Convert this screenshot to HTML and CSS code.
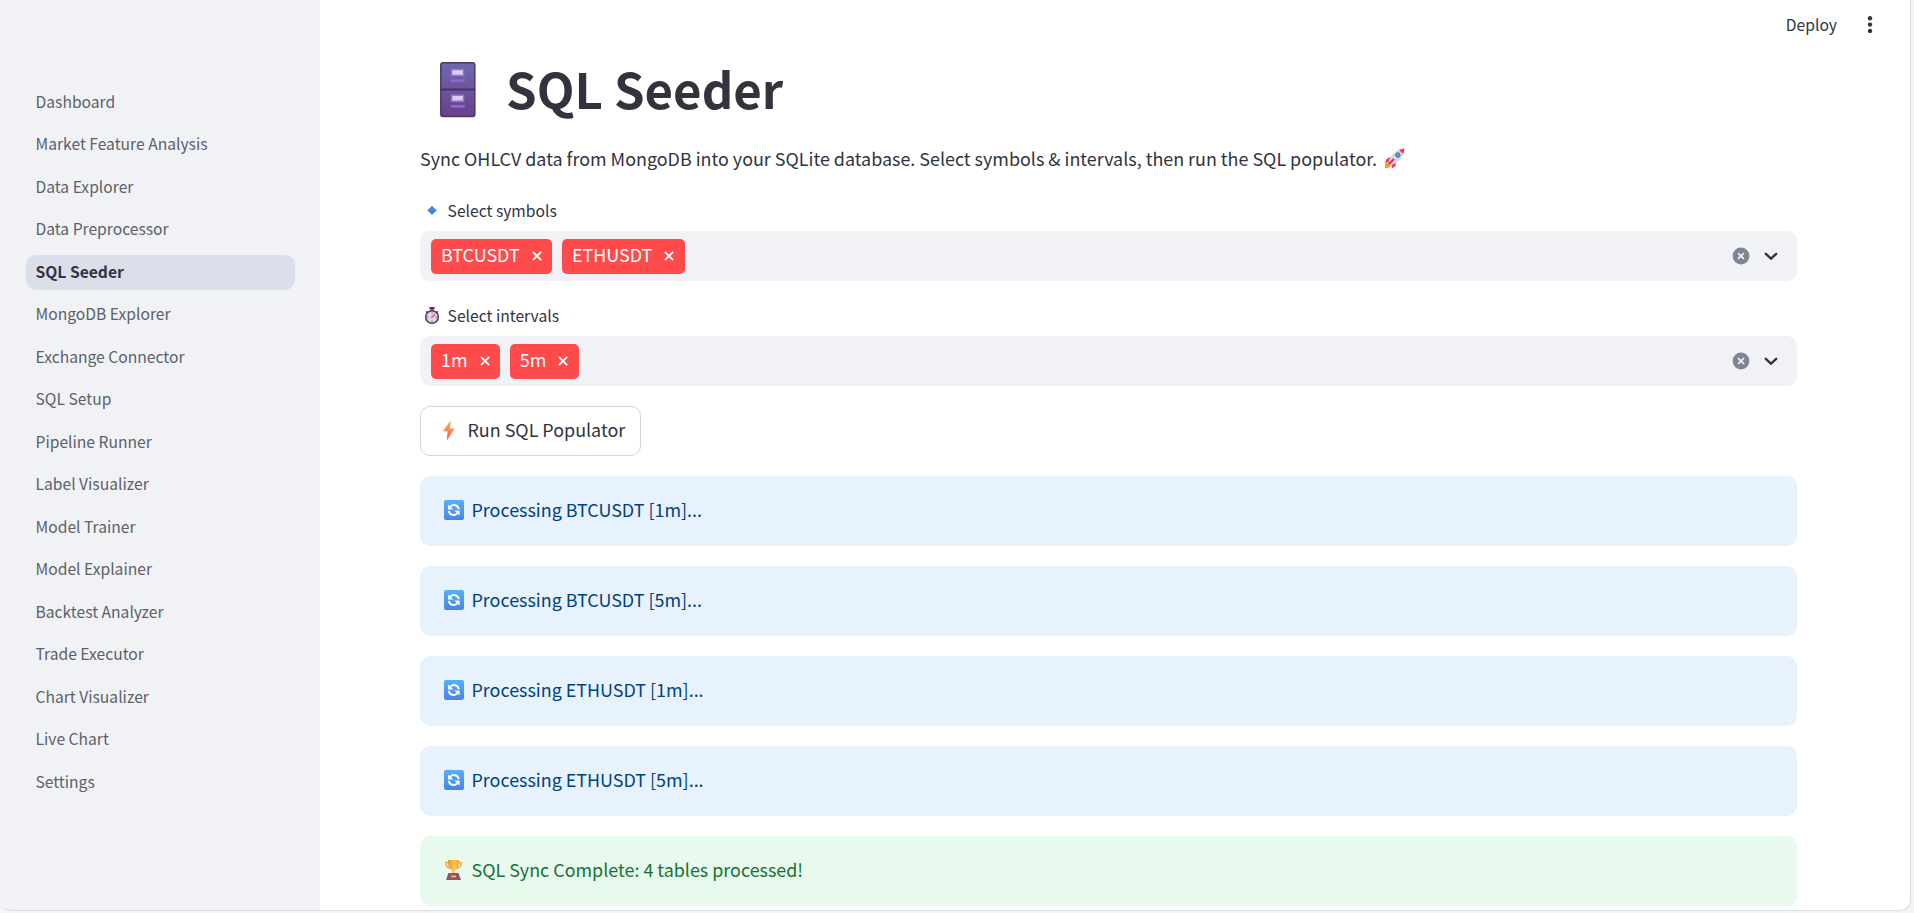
FILE: index.html
```html
<!DOCTYPE html>
<html lang="en">
<head>
<meta charset="utf-8">
<title>SQL Seeder</title>
<link rel="stylesheet" href="styles.css">
</head>
<body>
<svg class="defs" width="0" height="0" aria-hidden="true">
  <defs>
    <linearGradient id="cab" x1="0" y1="0" x2="0" y2="1"><stop offset="0" stop-color="#6e69ae"/><stop offset="1" stop-color="#66428a"/></linearGradient>
    <linearGradient id="bolt" x1="0" y1="0" x2="0" y2="1"><stop offset="0" stop-color="#f9ab4a"/><stop offset=".5" stop-color="#fb8a4c"/><stop offset="1" stop-color="#f6475a"/></linearGradient>
    <linearGradient id="blue" x1="0" y1="0" x2="0" y2="1"><stop offset="0" stop-color="#55b0fb"/><stop offset="1" stop-color="#4b83e6"/></linearGradient>
    <linearGradient id="gold" x1="0" y1="0" x2="1" y2="0"><stop offset="0" stop-color="#ee9038"/><stop offset=".6" stop-color="#fdc94c"/><stop offset="1" stop-color="#f3a03f"/></linearGradient>
    <symbol id="sync" viewBox="0 0 20 20">
      <rect width="20" height="20" rx="2" fill="url(#blue)"/>
      <path d="M6.4 6.6C9 4 14 4.6 14.8 9.2M13.2 13.4C10.6 16 5.6 15.4 4.8 10.8" fill="none" stroke="#fff" stroke-width="2"/>
      <path d="M4 4.4V9.4H9.4ZM15.6 15.6V10.6H10.2Z" fill="#fff"/>
    </symbol>
    <symbol id="cross" viewBox="0 0 10 10"><path d="M.9.9 9.1 9.1M9.1.9.9 9.1" fill="none" stroke="#fff" stroke-width="1.9"/></symbol>
    <symbol id="clear" viewBox="0 0 18 18"><circle cx="9" cy="9" r="8.4" fill="#808495"/><path d="M6.1 6.1 11.9 11.9M11.9 6.1 6.1 11.9" stroke="#f0f2f6" stroke-width="1.7"/></symbol>
    <symbol id="chevron" viewBox="0 0 14 9"><path d="M1.8 1.8 7 6.6 12.2 1.8" fill="none" stroke="#31333f" stroke-width="2.4" stroke-linecap="round" stroke-linejoin="miter"/></symbol>
  </defs>
</svg>
<div class="app">
  <nav class="sidebar">
    <a>Dashboard</a>
    <a>Market Feature Analysis</a>
    <a>Data Explorer</a>
    <a>Data Preprocessor</a>
    <a class="active">SQL Seeder</a>
    <a>MongoDB Explorer</a>
    <a>Exchange Connector</a>
    <a>SQL Setup</a>
    <a>Pipeline Runner</a>
    <a>Label Visualizer</a>
    <a>Model Trainer</a>
    <a>Model Explainer</a>
    <a>Backtest Analyzer</a>
    <a>Trade Executor</a>
    <a>Chart Visualizer</a>
    <a>Live Chart</a>
    <a>Settings</a>
  </nav>
  <main class="main">
    <header class="toolbar">
      <span>Deploy</span>
      <svg class="dots" width="6" height="18" viewBox="0 0 6 18" fill="#31333f"><circle cx="3" cy="2.3" r="2.2"/><circle cx="3" cy="8.6" r="2.2"/><circle cx="3" cy="14.9" r="2.2"/></svg>
    </header>
    <div class="content">
      <h1 class="title">
        <svg width="36" height="56" viewBox="0 0 36 56">
          <rect x=".8" y=".8" width="34" height="53.6" rx="2.2" fill="url(#cab)" stroke="#513760" stroke-width="1.5"/>
          <path d="M1 27.5H35" stroke="#4b315b" stroke-width="2"/>
          <rect x="11.6" y="7.5" width="12" height="6" fill="#dccdec" stroke="#9b70d5" stroke-width="1.5"/>
          <rect x="11.6" y="33.2" width="12" height="6" fill="#dccdec" stroke="#9b70d5" stroke-width="1.5"/>
          <rect x="10.8" y="17.2" width="14" height="2.8" rx="1" fill="#9166d2"/>
          <rect x="10.8" y="43" width="14" height="2.8" rx="1" fill="#9166d2"/>
        </svg>
        <span>SQL Seeder</span>
      </h1>
      <p class="intro"><span>Sync OHLCV data from MongoDB into your SQLite database. Select symbols &amp; intervals, then run the SQL populator.</span>
        <svg width="21" height="21" viewBox="0 0 21 21">
          <path d="M1 15 5 14 7 17 5.5 19.5 1 20.5Z" fill="#fa9b36"/>
          <path d="M7.5 9 3 10.5.5 14.5 5.5 14ZM12 13.5 11.5 18 7.8 20.5 7.5 15.5Z" fill="#ee396e"/>
          <path d="M4.5 14C6.5 7.5 10.5 3 17 1.2L20 4C18.5 10 13.5 14.8 7.5 17Z" fill="#dcd5e3"/>
          <path d="M15 2 20.5.3 19.3 6Z" fill="#f0364e"/>
          <path d="M5 16 10 11" stroke="#dc265f" stroke-width="2"/>
          <circle cx="13.8" cy="7" r="2.2" fill="#58a5ee" stroke="#536081"/>
        </svg>
      </p>
      <div class="label">
        <svg width="24" height="20" viewBox="0 0 24 20"><path d="M12 5.2 16.2 9.4 12 13.6 7.8 9.4Z" fill="#3e87dc" stroke="#3e87dc" stroke-width=".8" stroke-linejoin="round"/></svg>
        <span>Select symbols</span>
      </div>
      <div class="select">
        <span class="tag"><span>BTCUSDT</span><svg width="10" height="10"><use href="#cross"/></svg></span>
        <span class="tag"><span>ETHUSDT</span><svg width="10" height="10"><use href="#cross"/></svg></span>
        <span class="controls"><svg width="18" height="18"><use href="#clear"/></svg><svg width="14" height="9"><use href="#chevron"/></svg></span>
      </div>
      <div class="label second">
        <svg width="24" height="20" viewBox="0 0 24 20">
          <rect x="9.5" y="1" width="5" height="2.4" fill="#432e54"/><path d="M12 2V5M6.2 5.4 7.6 6.8M17.8 5.4 16.4 6.8" stroke="#533b66" stroke-width="1.8"/>
          <circle cx="12" cy="11" r="6.3" fill="#dfd5e4" stroke="#533b66" stroke-width="1.6"/>
          <path d="M12 6.3V7.5M12 14.5V15.7M7.3 11H8.5M15.5 11H16.7" stroke="#70557e"/><path d="M11.4 11.6 15 8" stroke="#dc426b" stroke-width="1.3"/>
        </svg>
        <span>Select intervals</span>
      </div>
      <div class="select">
        <span class="tag"><span>1m</span><svg width="10" height="10"><use href="#cross"/></svg></span>
        <span class="tag"><span>5m</span><svg width="10" height="10"><use href="#cross"/></svg></span>
        <span class="controls"><svg width="18" height="18"><use href="#clear"/></svg><svg width="14" height="9"><use href="#chevron"/></svg></span>
      </div>
      <button class="run">
        <svg width="12" height="21" viewBox="0 0 12 21"><path d="M7.7.2 0 11.2H4.6L3.8 20.4 11.6 8.4H6.8Z" fill="url(#bolt)"/></svg>
        <span>Run SQL Populator</span>
      </button>
      <div class="alert"><svg width="20" height="20"><use href="#sync"/></svg><span>Processing BTCUSDT [1m]...</span></div>
      <div class="alert"><svg width="20" height="20"><use href="#sync"/></svg><span>Processing BTCUSDT [5m]...</span></div>
      <div class="alert"><svg width="20" height="20"><use href="#sync"/></svg><span>Processing ETHUSDT [1m]...</span></div>
      <div class="alert"><svg width="20" height="20"><use href="#sync"/></svg><span>Processing ETHUSDT [5m]...</span></div>
      <div class="alert success">
        <svg width="20" height="20" viewBox="0 0 20 20">
          <path d="M5 2.5H2C1.5 6 4 8.3 7 8.3M14 2.5H17C17.5 6 15 8.3 12 8.3" fill="none" stroke="#f5a544" stroke-width="1.5"/>
          <path d="M4 0H15C15.3 6 13.5 9.5 10.7 10.5V13H8.3V10.5C5.5 9.5 3.7 6 4 0Z" fill="url(#gold)"/>
          <path d="M4.4 13H14.6L15.4 15.6 17 20H2L3.6 15.6Z" fill="#945064"/><rect x="7" y="15.6" width="5" height="1.7" fill="#fbc24e"/>
        </svg>
        <span>SQL Sync Complete: 4 tables processed!</span>
      </div>
    </div>
  </main>
</div>
</body>
</html>
```
FILE: styles.css
```css
* { box-sizing: border-box; }
body {
  margin: 0;
  height: 913px;
  overflow: hidden;
  background: #f4f4f4;
  color: #31333f;
  font-family: "Noto Sans CJK SC", "Noto Sans", sans-serif;
  font-size: 17.91px;
  line-height: 30px;
}
svg { display: block; flex: none; }
.defs { position: absolute; }
.app {
  display: flex;
  width: 1911px;
  height: 911px;
  overflow: hidden;
  background: #fff;
  border: solid #dcdddf;
  border-width: 0 1px 1px 0;
  border-radius: 0 0 11px 11px;
}
.sidebar {
  display: flex;
  flex-direction: column;
  gap: 7.5px;
  width: 320px;
  flex: none;
  padding: 85px 25px 0 26px;
  background: #f0f2f6;
}
.sidebar a {
  height: 35px;
  padding: 0 9.5px;
  border-radius: 10px;
  color: #5d5f69;
  font-size: 15.65px;
  line-height: 33px;
  white-space: nowrap;
}
.sidebar a:nth-child(even) { line-height: 32.4px; }
.sidebar .active { background: #dadfea; color: #31333f; font-weight: 600; }
.main { flex: 1; }
.toolbar {
  display: flex;
  align-items: center;
  justify-content: flex-end;
  gap: 30px;
  height: 50px;
  padding-right: 37px;
  font-size: 15.65px;
}
.content { width: 1477px; margin-left: 100px; padding-right: 100px; white-space: nowrap; }
.title {
  display: flex;
  align-items: center;
  gap: 30px;
  height: 80px;
  margin: 0;
  padding-left: 20px;
  font-size: 49.1px;
  font-weight: 700;
  line-height: 76px;
}
.title span { padding-bottom: 4px; }
.intro { display: flex; align-items: center; gap: 7px; height: 30px; margin: 13px 0 23px; }
.label { display: flex; align-items: center; gap: 3.6px; height: 30px; margin-bottom: 5px; font-size: 15.65px; }
.second { margin-top: 20px; }
.select {
  display: flex;
  align-items: center;
  gap: 10px;
  height: 50px;
  padding: 0 19px 0 11px;
  border-radius: 10px;
  background: #f0f2f6;
}
.tag {
  display: flex;
  align-items: center;
  gap: 12px;
  height: 35px;
  padding: 0 10.3px 0 10px;
  border-radius: 5px;
  background: #ff4b4b;
  color: #fff;
}
.tag span { padding-bottom: 4px; }
.controls { display: flex; align-items: center; gap: 14px; margin-left: auto; }
.run {
  display: flex;
  align-items: center;
  gap: 12.5px;
  width: 221px;
  height: 50px;
  margin: 20px 0;
  padding: 0 0 2px 22px;
  border: 1px solid #d6d6d8;
  border-radius: 10px;
  background: #fff;
  color: inherit;
  font: inherit;
}
.run span, .alert span { padding-bottom: 2px; }
.alert {
  display: flex;
  align-items: center;
  gap: 7.5px;
  height: 70px;
  margin-bottom: 20px;
  padding: 0 24px 2px;
  border-radius: 10px;
  background: #e8f2fc;
  color: #004280;
}
.success { background: #e8f9ee; color: #177233; }
```
